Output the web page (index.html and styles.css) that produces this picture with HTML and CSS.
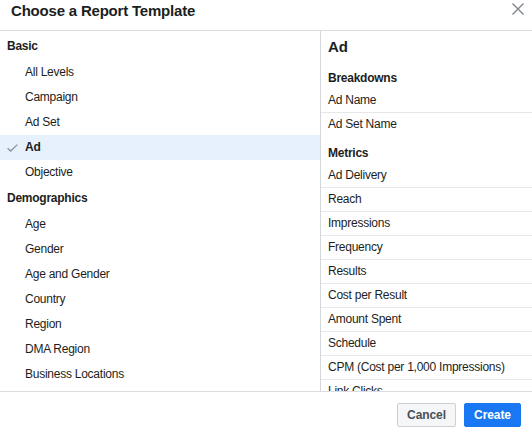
FILE: index.html
```html
<!DOCTYPE html>
<html>
<head>
<meta charset="utf-8">
<link rel="stylesheet" href="styles.css">
</head>
<body>
<div class="dialog">
  <header class="head">
    <h1 class="title">Choose a Report Template</h1>
    <button class="close" aria-label="Close">
      <svg width="12" height="12" viewBox="0 0 12 12"><path d="M0.5 0.5 L11.5 11.5 M11.5 0.5 L0.5 11.5" stroke="#7f858d" stroke-width="1.4" fill="none"/></svg>
    </button>
  </header>
  <div class="body">
    <nav class="left">
      <div class="group">Basic</div>
      <div class="opt">All Levels</div>
      <div class="opt">Campaign</div>
      <div class="opt">Ad Set</div>
      <div class="opt sel">
        <svg class="check" width="11" height="8" viewBox="0 0 11 8"><path d="M0.6 4.2 L3.6 7 L10.4 0.6" stroke="#8a9099" stroke-width="1.3" fill="none"/></svg>
        Ad
      </div>
      <div class="opt">Objective</div>
      <div class="group">Demographics</div>
      <div class="opt">Age</div>
      <div class="opt">Gender</div>
      <div class="opt">Age and Gender</div>
      <div class="opt">Country</div>
      <div class="opt">Region</div>
      <div class="opt">DMA Region</div>
      <div class="opt">Business Locations</div>
    </nav>
    <section class="right">
      <h2 class="ptitle">Ad</h2>
      <h3 class="phead">Breakdowns</h3>
      <ul class="plist">
        <li>Ad Name</li>
        <li>Ad Set Name</li>
      </ul>
      <h3 class="phead">Metrics</h3>
      <ul class="plist">
        <li>Ad Delivery</li>
        <li>Reach</li>
        <li>Impressions</li>
        <li>Frequency</li>
        <li>Results</li>
        <li>Cost per Result</li>
        <li>Amount Spent</li>
        <li>Schedule</li>
        <li>CPM (Cost per 1,000 Impressions)</li>
        <li>Link Clicks</li>
        <li>CTR (Link Click-Through Rate)</li>
      </ul>
    </section>
  </div>
  <footer class="foot">
    <button class="btn cancel">Cancel</button>
    <button class="btn create">Create</button>
  </footer>
</div>
</body>
</html>
```
FILE: styles.css
```css
* { box-sizing: border-box; }
html, body { margin: 0; padding: 0; background: #fff; }
body {
  font-family: "Liberation Sans", Arial, sans-serif;
  color: #1c1e21;
  font-size: 12px;
  letter-spacing: -0.25px;
}
.dialog {
  width: 532px;
  height: 436px;
  display: flex;
  flex-direction: column;
  overflow: hidden;
}
.head {
  height: 31px;
  border-bottom: 1px solid #dadde1;
  display: flex;
  align-items: flex-start;
  justify-content: space-between;
  padding: 2px 8px 0 11px;
  flex: none;
}
.title {
  margin: 0;
  font-size: 15px;
  line-height: 18px;
  font-weight: bold;
  letter-spacing: -0.2px;
  color: #1c1e21;
}
.close {
  border: 0;
  background: none;
  padding: 0;
  margin-top: 1px;
  width: 12px;
  height: 13px;
  display: flex;
}
.body {
  height: 360px;
  display: flex;
  flex: none;
}
.left {
  width: 321px;
  flex: none;
  border-right: 1px solid #d4d7dc;
  padding-top: 2px;
}
.group {
  height: 27px;
  line-height: 27px;
  padding-left: 7px;
  font-weight: bold;
}
.opt {
  height: 25px;
  line-height: 25px;
  padding-left: 25px;
  position: relative;
  color: #1c1e21;
}
.opt.sel {
  background: #e7f1fd;
  font-weight: bold;
}
.check {
  position: absolute;
  left: 7px;
  top: 9px;
}
.right {
  flex: 1;
  overflow: hidden;
  padding-top: 6px;
}
.ptitle {
  margin: 0 0 4px;
  padding-left: 7px;
  font-size: 15px;
  line-height: 20px;
  font-weight: bold;
  letter-spacing: -0.2px;
}
.phead {
  margin: 0;
  padding: 9px 0 3px 7px;
  font-size: 12px;
  line-height: 16px;
  font-weight: bold;
}
.plist {
  list-style: none;
  margin: 0;
  padding: 0;
}
.plist li {
  height: 24px;
  line-height: 23px;
  padding-left: 7px;
  border-bottom: 1px solid #e5e7ea;
}
.plist li:last-child { border-bottom: 0; height: 23px; }
.foot {
  flex: 1;
  border-top: 1px solid #dadde1;
  display: flex;
  justify-content: flex-end;
  align-items: flex-start;
  gap: 8px;
  padding: 11px 11px 0 0;
}
.btn {
  height: 24px;
  border-radius: 2px;
  font-family: "Liberation Sans", Arial, sans-serif;
  font-size: 12px;
  font-weight: bold;
  letter-spacing: -0.1px;
  padding: 0;
  line-height: 22px;
  text-align: center;
}
.cancel {
  background: #f5f6f7;
  border: 1px solid #ccd0d5;
  color: #4b4f56;
  width: 59px;
}
.create {
  background: #1877f2;
  border: 1px solid #1877f2;
  color: #fff;
  width: 57px;
}
```
